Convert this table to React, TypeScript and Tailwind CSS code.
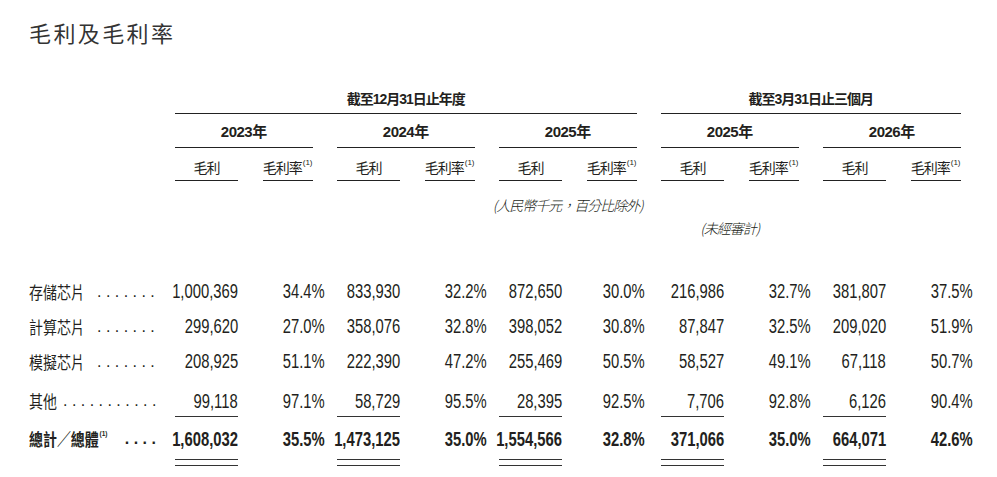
import React from 'react';

// --- Data ---

type Pair = [string, string];

interface Row {
  label: string;
  dots: string;
  vals: Pair[];
}

const rows: Row[] = [
  {
    label: '存儲芯片',
    dots: '. . . . . . .',
    vals: [['1,000,369', '34.4%'], ['833,930', '32.2%'], ['872,650', '30.0%'], ['216,986', '32.7%'], ['381,807', '37.5%']],
  },
  {
    label: '計算芯片',
    dots: '. . . . . . .',
    vals: [['299,620', '27.0%'], ['358,076', '32.8%'], ['398,052', '30.8%'], ['87,847', '32.5%'], ['209,020', '51.9%']],
  },
  {
    label: '模擬芯片',
    dots: '. . . . . . .',
    vals: [['208,925', '51.1%'], ['222,390', '47.2%'], ['255,469', '50.5%'], ['58,527', '49.1%'], ['67,118', '50.7%']],
  },
];

const other: Row = {
  label: '其他',
  dots: '. . . . . . . . . . .',
  vals: [['99,118', '97.1%'], ['58,729', '95.5%'], ['28,395', '92.5%'], ['7,706', '92.8%'], ['6,126', '90.4%']],
};

const totals: Pair[] = [
  ['1,608,032', '35.5%'],
  ['1,473,125', '35.0%'],
  ['1,554,566', '32.8%'],
  ['371,066', '35.0%'],
  ['664,071', '42.6%'],
];

const years = ['2023年', '2024年', '2025年', '2025年', '2026年'];

// shared column template: label, then (amount, ratio) x 5
const GRID = 'grid grid-cols-[121.5px_repeat(5,63px_50px)] gap-x-[24.5px]';
const NUM = "font-['Liberation_Sans',sans-serif]";
const CJK = "font-['Liberation_Sans','Noto_Sans_CJK_TC',sans-serif]";

// the % sign hangs past the column edge
const pctShift = (i: number) => (i === 2 ? '-mr-[8px]' : '-mr-[12px]');

// condensed figures, like the printed narrow face
const Num: React.FC<{ children: React.ReactNode }> = ({ children }) => (
  <span className="inline-block shrink-0 whitespace-nowrap scale-x-[0.74] origin-right">{children}</span>
);

const Sup = () => (
  <span className={`${NUM} text-[8px] leading-none align-top relative top-[1px] ml-[1px] tracking-normal`}>(1)</span>
);

const Label: React.FC<{ label: React.ReactNode; dots: string; bold?: boolean }> = ({ label, dots, bold }) => (
  <div className="flex justify-between whitespace-nowrap">
    <span
      className={`inline-block scale-x-[0.82] origin-left font-['Noto_Sans_CJK_TC',sans-serif] text-[17px] ${
        bold ? 'font-semibold' : 'font-normal'
      }`}
    >
      {label}
    </span>
    <span className="font-['Liberation_Sans',sans-serif] text-[16px]">{dots}</span>
  </div>
);

export default function App() {
  return (
    <div className="w-[997px] min-h-[477px] bg-white pl-[29px] text-[#231f20]">
      <h1 className="pt-[18px] h-[46px] text-[22px] leading-[28px] tracking-[2.4px] text-[#333] font-['Noto_Sans_CJK_TC',sans-serif]">
        毛利及毛利率
      </h1>

      {/* Period headers */}
      <div className={`${GRID} mt-[40px] ${CJK} text-[14px] leading-[20px] font-bold tracking-[-1px]`}>
        <div className="col-start-2 col-span-6 border-b border-[#222] pt-[3px] pb-[4px] text-center">截至12月31日止年度</div>
        <div className="col-start-8 col-span-4 border-b border-[#222] pt-[3px] pb-[4px] text-center">截至3月31日止三個月</div>
      </div>

      {/* Years */}
      <div className={`${GRID} ${CJK} text-[15px] leading-[20px] font-bold tracking-[-0.5px]`}>
        <div />
        {years.map((y, i) => (
          <div key={i} className="col-span-2 border-b border-[#222] pt-[8px] pb-[5px] text-center">
            {y}
          </div>
        ))}
      </div>

      {/* Sub headers */}
      <div className={`${GRID} ${CJK} text-[14px] leading-[20px] tracking-[-1px]`}>
        <div />
        {years.map((_, i) => (
          <React.Fragment key={i}>
            <div className="border-b border-[#222] pt-[10px] pb-[2px] text-center">毛利</div>
            <div className="border-b border-[#222] pt-[10px] pb-[2px] text-right whitespace-nowrap">
              毛利率
              <Sup />
            </div>
          </React.Fragment>
        ))}
      </div>

      {/* Notes */}
      <div className={`${GRID} font-['Noto_Sans_CJK_TC',sans-serif] text-[14px] leading-[20px] italic font-light tracking-[-1px]`}>
        <div className="col-start-6 col-span-2 flex justify-center pt-[14px] whitespace-nowrap">(人民幣千元，百分比除外)</div>
      </div>
      <div className={`${GRID} font-['Noto_Sans_CJK_TC',sans-serif] text-[14px] leading-[20px] italic font-light tracking-[-1px]`}>
        <div className="col-start-8 col-span-2 flex justify-center pt-[3px] whitespace-nowrap">(未經審計)</div>
      </div>

      {/* Body */}
      <div className="mt-[35.5px]">
        {rows.map((r) => (
          <div key={r.label} className={`${GRID} h-[35px] leading-[35px] ${NUM} text-[20px]`}>
            <Label label={r.label} dots={r.dots} />
            {r.vals.map(([amt, pct], i) => (
              <React.Fragment key={i}>
                <div className="flex justify-end">
                  <Num>{amt}</Num>
                </div>
                <div className={`flex justify-end ${pctShift(i)}`}>
                  <Num>{pct}</Num>
                </div>
              </React.Fragment>
            ))}
          </div>
        ))}

        <div className={`${GRID} leading-[20px] ${NUM} text-[20px]`}>
          <div className="pt-[12px]">
            <Label label={other.label} dots={other.dots} />
          </div>
          {other.vals.map(([amt, pct], i) => (
            <React.Fragment key={i}>
              <div className="flex justify-end pt-[12px] pb-[5.5px] border-b border-[#333]">
                <Num>{amt}</Num>
              </div>
              <div className={`flex justify-end pt-[12px] ${pctShift(i)}`}>
                <Num>{pct}</Num>
              </div>
            </React.Fragment>
          ))}
        </div>

        <div className={`${GRID} leading-[20px] ${NUM} text-[20px] font-bold`}>
          <div className="pt-[12px]">
            <Label
              bold
              label={
                <>
                  總計／總體
                  <Sup />
                </>
              }
              dots=". . . ."
            />
          </div>
          {totals.map(([amt, pct], i) => (
            <React.Fragment key={i}>
              <div className="border-b border-[#333] pb-[5px]">
                <div className="flex justify-end pt-[12px] pb-[10px] border-b border-[#333]">
                  <Num>{amt}</Num>
                </div>
              </div>
              <div className={`flex justify-end pt-[12px] ${pctShift(i)}`}>
                <Num>{pct}</Num>
              </div>
            </React.Fragment>
          ))}
        </div>
      </div>
    </div>
  );
}
